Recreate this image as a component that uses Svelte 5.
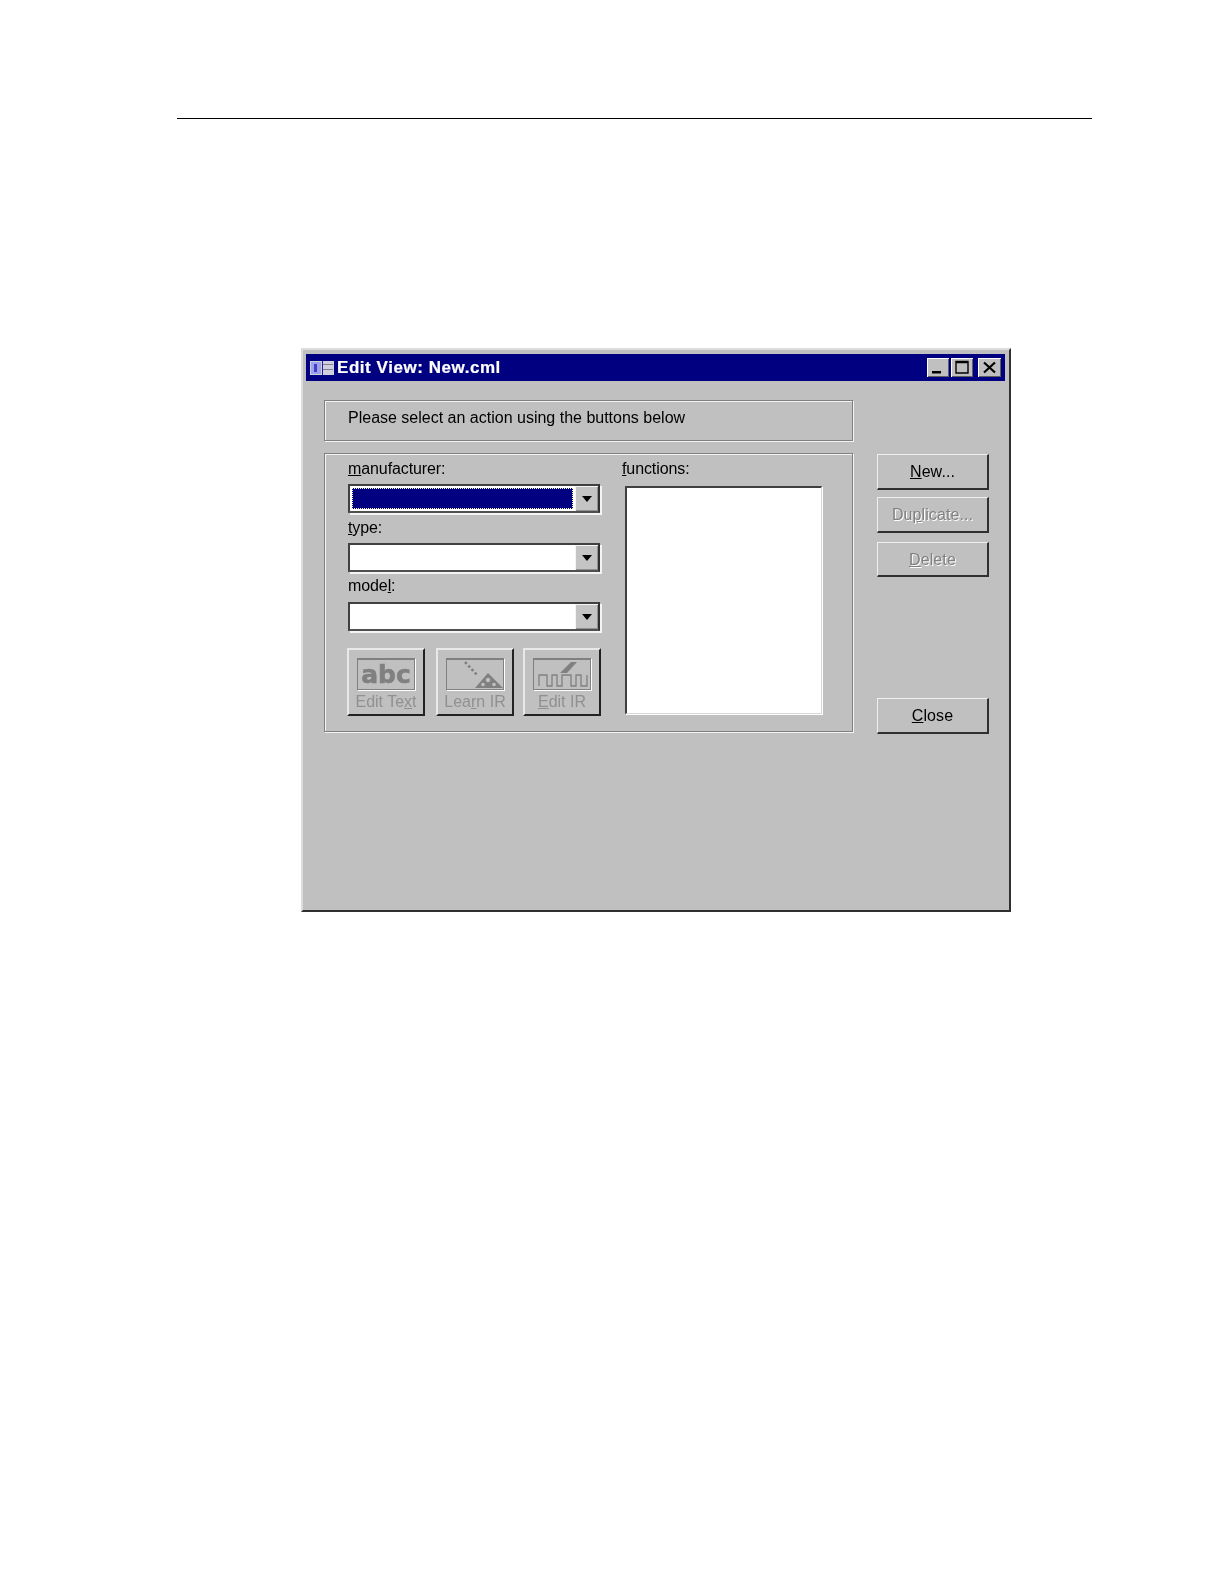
<script>
  const tools = [
    { key: 'text', before: 'Edit Te', u: 'x', after: 't' },
    { key: 'learn', before: 'Lea', u: 'r', after: 'n IR' },
    { key: 'edit', before: '', u: 'E', after: 'dit IR' }
  ];
</script>

<div class="page">
  <div class="rule"></div>
  <div class="window">
    <div class="titlebar">
      <svg class="appicon" width="24" height="14" viewBox="0 0 24 14">
        <rect width="24" height="14" fill="#d0d0dc" />
        <rect x="1" y="1" width="10" height="12" fill="#a0a0f0" />
        <rect x="4" y="3" width="3" height="8" fill="#4040c0" />
        <rect x="13" y="3" width="10" height="1" fill="#808090" />
        <rect x="13" y="8" width="10" height="1" fill="#808090" />
        <rect x="12" y="0" width="1" height="14" fill="#202090" />
      </svg>
      <span class="title">Edit View: New.cml</span>
      <div class="controls">
        <span class="ctl"><svg width="22" height="19" viewBox="0 0 22 19"><rect x="5" y="13" width="9" height="2.5" fill="#000" /></svg></span>
        <span class="ctl"><svg width="22" height="19" viewBox="0 0 22 19"><path d="M5 3.5h12v11.5h-12zM5 4.5h12" fill="none" stroke="#000" stroke-width="1.4" /></svg></span>
        <span class="ctl close"><svg width="23" height="19" viewBox="0 0 23 19"><path d="M6 4.5l11 10M17 4.5L6 14.5" fill="none" stroke="#000" stroke-width="2.2" /></svg></span>
      </div>
    </div>

    <div class="body">
      <div class="left">
        <div class="message etched">Please select an action using the buttons below</div>
        <div class="group etched">
          <div class="fields">
            <label class="l1"><u>m</u>anufacturer:</label>
            <div class="combo">
              <div class="field selected"><div class="focus"></div></div>
              <div class="drop"><i></i></div>
            </div>
            <label class="l2"><u>t</u>ype:</label>
            <div class="combo">
              <div class="field"></div>
              <div class="drop"><i></i></div>
            </div>
            <label class="l3">mode<u>l</u>:</label>
            <div class="combo">
              <div class="field"></div>
              <div class="drop"><i></i></div>
            </div>
            <div class="tools">
              {#each tools as t}
                <div class="tool">
                  <div class="glyph">
                    {#if t.key === 'text'}
                      <span class="abc">abc</span>
                    {:else if t.key === 'learn'}
                      <svg width="56" height="30" viewBox="0 0 56 30">
                        <path d="M18 3l13 14" stroke="#808080" stroke-width="2.6" stroke-dasharray="2.6 2.2" fill="none" />
                        <path d="M28 29L41 14 56 29z" fill="#808080" />
                        <circle cx="41" cy="21" r="2.2" fill="#c0c0c0" />
                        <circle cx="47" cy="25.5" r="1.8" fill="#c0c0c0" />
                        <circle cx="36" cy="25.5" r="1.8" fill="#c0c0c0" />
                      </svg>
                    {:else}
                      <svg width="56" height="30" viewBox="0 0 56 30">
                        <path d="M5 27V16h8v11h5V16h5v11h5V16h9v11h5V16h5v11h6V16" fill="none" stroke="#808080" stroke-width="1.3" />
                        <path d="M26 14L37 3h6L33 14z" fill="#808080" />
                      </svg>
                    {/if}
                  </div>
                  <div class="toollabel">{t.before}<u>{t.u}</u>{t.after}</div>
                </div>
              {/each}
            </div>
          </div>
          <div class="funcs">
            <label class="l1"><u>f</u>unctions:</label>
            <div class="list"></div>
          </div>
        </div>
      </div>

      <div class="right">
        <div class="btn tall"><span><u>N</u>ew...</span></div>
        <div class="btn off b2"><span>Du<u>p</u>licate...</span></div>
        <div class="btn off b3"><span><u>D</u>elete</span></div>
        <div class="btn last tall"><span><u>C</u>lose</span></div>
      </div>
    </div>
  </div>
</div>

<style>
  :global(body) { margin: 0; background: #fff; }
  .page { width: 1224px; height: 1584px; padding-top: 118px; box-sizing: border-box; font-family: "Liberation Sans", Arial, sans-serif; color: #000; overflow: hidden; }
  .rule { width: 915px; height: 1px; margin-left: 177px; background: #000; }
  .window {
    width: 710px; height: 564px; margin: 229px 0 0 301px; box-sizing: border-box;
    background: #c0c0c0; padding: 4px 4px 3px 3px;
    border-style: solid; border-width: 2px;
    border-color: #dcdcdc #303030 #303030 #dcdcdc;
    filter: blur(0.4px);
    display: flex; flex-direction: column;
  }
  .titlebar { height: 27px; background: #000080; display: flex; align-items: center; padding: 0 4px 0 4px; flex: none; box-sizing: border-box; }
  .appicon { flex: none; }
  .title { color: #fff; font-weight: bold; font-size: 17px; letter-spacing: 0.55px; margin-left: 3px; -webkit-text-stroke: 0.2px #fff; }
  .controls { margin-left: auto; display: flex; gap: 2px; }
  .ctl { width: 22px; height: 19px; background: #c0c0c0; box-shadow: inset 1px 1px 0 #fff, inset -1px -1px 0 #606060; display: block; }
  .ctl svg { display: block; }
  .ctl.close { width: 23px; margin-left: 3px; }

  .body { flex: 1; display: flex; padding: 19px 0 0 18px; min-height: 0; font-size: 16px; }
  .left { width: 529px; height: 332px; display: flex; flex-direction: column; gap: 12px; flex: none; }
  .etched { box-sizing: border-box; border: 1px solid #808080; box-shadow: 1px 1px 0 #f4f4f4, inset 1px 1px 0 #f4f4f4; }
  .message { height: 41px; padding: 5px 0 0 23px; line-height: 24px; }
  .group { height: 279px; display: flex; padding-left: 23px; }
  .fields { width: 255px; display: flex; flex-direction: column; flex: none; }
  label { display: block; height: 30px; letter-spacing: -0.1px; }
  .l1 { line-height: 30px; }
  .l2 { line-height: 30px; }
  .l3 { line-height: 28px; }
  .combo {
    height: 29px; box-sizing: border-box; display: flex; background: #fff; flex: none;
    border-style: solid; border-width: 2px; border-color: #404040 #303030 #505050 #404040;
    box-shadow: 2px 2px 0 #f4f4f4; margin-right: 3px;
  }
  .field { flex: 1; min-width: 0; box-sizing: border-box; }
  .selected .focus { height: 100%; background: #000080; outline: 1px dotted #ffffcc; outline-offset: -1px; }
  .field.selected { padding: 2px; }
  .drop { width: 23px; flex: none; background: #c4c4c4; box-shadow: inset 1px 1px 0 #f4f4f4, inset -1px -1px 0 #909090; display: flex; align-items: center; justify-content: center; }
  .drop i { width: 0; height: 0; border-left: 5px solid transparent; border-right: 5px solid transparent; border-top: 6px solid #000; }

  .tools { display: flex; margin-top: 17px; gap: 11px; margin-left: -1px; }
  .tool {
    width: 78px; height: 68px; box-sizing: border-box; background: #c0c0c0;
    border-style: solid; border-width: 2px; border-color: #e8e8e8 #222 #222 #e8e8e8;
    display: flex; flex-direction: column; align-items: center; padding-top: 8px;
  }
  .tool + .tool + .tool { margin-left: -2px; }
  .glyph { width: 58px; height: 32px; box-sizing: border-box; border: 1px solid #808080; border-width: 2px 1px 1px 1px; box-shadow: 1px 1px 0 #fff; display: flex; align-items: flex-end; justify-content: center; flex: none; overflow: hidden; }
  .abc { font-family: "DejaVu Sans", sans-serif; font-weight: bold; font-size: 25px; line-height: 29px; color: #808080; -webkit-text-stroke: 0.6px #808080; }
  .toollabel { color: #909090; font-size: 16px; line-height: 20px; margin-top: 2px; }

  .funcs { margin-left: 19px; flex: 1; }
  .list { width: 197px; height: 228px; margin: 2px 0 0 3px; box-sizing: border-box; background: #fff; border-style: solid; border-width: 2px 1px 1px 2px; border-color: #404040 #d8d8d8 #d8d8d8 #404040; box-shadow: 1px 1px 0 #fff; }

  .right { width: 112px; height: 334px; margin-left: 24px; padding-top: 54px; box-sizing: border-box; display: flex; flex-direction: column; flex: none; }
  .btn {
    height: 35px; flex: none; box-sizing: border-box; background: #c0c0c0; text-align: center; line-height: 33px; letter-spacing: 0.1px;
    border-style: solid; border-width: 1px 2px 2px 1px; border-color: #f0f0f0 #303030 #303030 #f0f0f0;
  }
  .tall { height: 36px; }
  .off { color: #808080; text-shadow: 1px 1px 0 #fff; }
  .b2 { margin-top: 7px; height: 36px; }
  .b3 { margin-top: 9px; }
  .last { margin-top: auto; }
</style>
